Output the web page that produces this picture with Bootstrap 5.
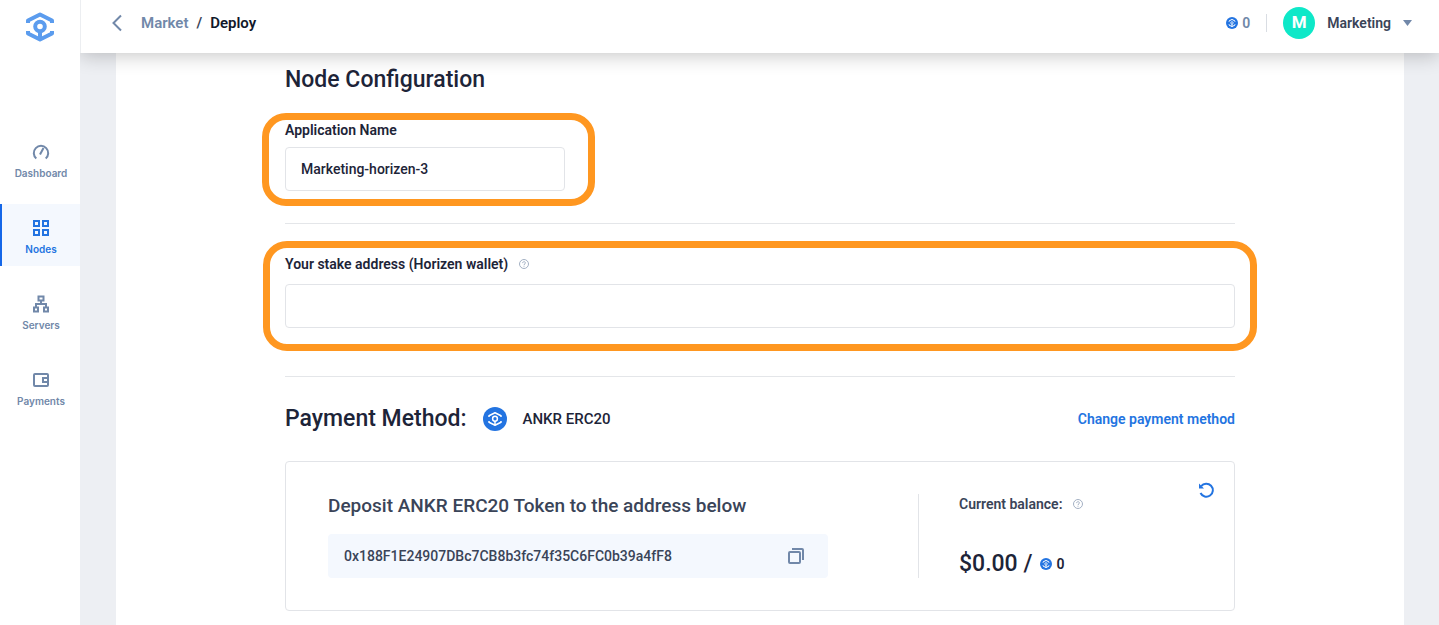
<!DOCTYPE html>
<html lang="en">
<head>
<meta charset="utf-8">
<meta name="viewport" content="width=device-width, initial-scale=1">
<title>Deploy</title>
<link href="https://cdn.jsdelivr.net/npm/bootstrap@5.3.0/dist/css/bootstrap.min.css" rel="stylesheet">
<style>
  :root { --ink: #1d2438; --slate: #3a4458; --muted: #7188a9; --brand: #2374e1; --line: #e2e4e8; --pale: #f4f8fe; --mark: #ff9720; }
  body { font-family: Roboto, "Liberation Sans", sans-serif; font-size: 14px; line-height: 20px; font-weight: 600; color: var(--ink); background: #edeff3; }
  a { text-decoration: none; }
  svg { display: block; flex: none; }
  .side { width: 80px; flex: none; position: relative; z-index: 1030; }
  .side-logo { height: 53px; margin-bottom: 75px; }
  .side-link { height: 62px; margin-bottom: 14px; padding-top: 5px; gap: 5px; border-left: 2px solid transparent; color: var(--muted); font: 600 10px/14px Inter, sans-serif; }
  .side-link.active { background: var(--pale); border-color: #1567e8; color: var(--brand); }
  .topbar { height: 53px; padding: 0 27px 7px 30px; border-left: 1px solid #eceef1; box-shadow: 0 2px 20px rgba(0,0,0,.24); }
  .crumbs { --bs-breadcrumb-item-padding-x: 8px; --bs-breadcrumb-divider-color: var(--slate); font-size: 15px; }
  .crumbs a, .muted { color: var(--muted); }
  .crumbs .active { color: #11182a; }
  .avatar { width: 32px; height: 32px; background: #0ee8c8; font-size: 17px; font-weight: 700; }
  .user { font-size: 14px; font-weight: 600; }
  .sep { width: 1px; height: 18px; background: #d9dde3; }
  .slate { color: var(--slate); }
  .panel { margin: 0 35px 0 36px; padding-top: 13px; }
  .inner { max-width: 950px; }
  h1, h2 { font-size: 23px; line-height: 28px; font-weight: 500; }
  h3 { font-size: 19px; line-height: 24px; font-weight: 500; color: var(--slate); }
  .group { position: relative; }
  .group::after { content: ""; position: absolute; border: 7px solid var(--mark); border-radius: 24px; pointer-events: none; }
  .group-name { margin-top: 26px; max-width: 280px; }
  .group-name::after { inset: -7px -30px -15px -23px; }
  .group-name .field { margin-top: 7px; }
  .group-stake::after { inset: -13px -22px -23px -22px; }
  .group-stake .field { margin-top: 10px; }
  .field { height: 44px; border: 1px solid var(--line); border-radius: 4px; padding: 0 15px; font-size: 14px; color: var(--ink); font-weight: 500; }
  .hint { gap: 11px; }
  .rule { margin: 32px 0 30px; border-top: 1px solid #e4e6e9; opacity: 1; }
  .rule-low { margin: 48px 0 28px; }
  .coin-name { font-size: 15px; font-weight: 500; }
  .deposit { margin-top: 28px; border: 1px solid var(--line); border-radius: 4px; padding: 32px 42px; }
  .address { height: 44px; background: var(--pale); border-radius: 4px; padding: 0 24px 0 16px; color: var(--slate); font-weight: 500; margin-top: 16px; }
  .left { width: 500px; }
  .balance { margin-left: 90px; padding-left: 40px; border-left: 1px solid var(--line); }
  .refresh { position: absolute; top: 20px; right: 19px; }
  .link { color: var(--brand); }
</style>
</head>
<body>
<svg width="0" height="0" class="position-absolute" aria-hidden="true">
  <symbol id="ankr" viewBox="0 0 28 30">
    <g fill="none" stroke="currentColor" stroke-linejoin="round">
      <path d="M2 11V8.500L14 2.500 26 8.500V11M2 19V21.500L14 27.500 26 21.500V19"/>
      <circle cx="14" cy="14.500" r="4.800"/><path d="M14 19v8"/>
    </g>
  </symbol>
  <symbol id="coin" viewBox="0 0 12 12">
    <circle cx="6" cy="6" r="6" fill="#2374e1"/>
    <path d="M3 4.600V4L6 2.400 9 4v.6M3 7.400V8l3 1.600L9 8v-.6M6 7v2.500" fill="none" stroke="#fff"/><circle cx="6" cy="5.900" r="1.200" fill="none" stroke="#fff" stroke-width=".8"/>
  </symbol>
  <symbol id="help" viewBox="0 0 10 10">
    <circle cx="5" cy="5" r="4.500" fill="none" stroke="#a3b0c3"/>
    <path d="M3.600 4.100C3.600 2.200 6.500 2.300 6.400 4 6.400 4.900 5 4.900 5 6M5 6.700v1" fill="none" stroke="#a3b0c3"/>
  </symbol>
</svg>
<div class="d-flex min-vh-100">
  <nav class="side bg-white d-flex flex-column" aria-label="Main">
    <a href="#" class="side-logo d-flex justify-content-center align-items-center" aria-label="Home"><svg width="28" height="30" color="#5b9cee" stroke-width="4"><use href="#ankr"/></svg></a>
    <a href="#" class="side-link d-flex flex-column align-items-center justify-content-center">
      <svg width="18" height="18" viewBox="0 0 18 18" fill="none" stroke="currentColor" stroke-width="2"><path d="M4.300 15.500A7.200 7.200 0 1 1 13.700 15.500"/><path d="M8 11.500 11.500 5"/></svg>Dashboard</a>
    <a href="#" class="side-link active d-flex flex-column align-items-center justify-content-center">
      <svg width="18" height="18" viewBox="0 0 18 18" fill="none" stroke="currentColor" stroke-width="2"><path d="M2 2h5v5H2zM11 2h5v5h-5zM2 11h5v5H2zM11 11h5v5h-5z"/></svg>Nodes</a>
    <a href="#" class="side-link d-flex flex-column align-items-center justify-content-center">
      <svg width="18" height="18" viewBox="0 0 18 18" fill="none" stroke="currentColor" stroke-width="2"><path d="M6.500 1.500h5v4h-5zM2 12.500h4v4H2zM12 12.500h4v4h-4zM9 6v3M4 12V9h10v3"/></svg>Servers</a>
    <a href="#" class="side-link d-flex flex-column align-items-center justify-content-center">
      <svg width="18" height="18" viewBox="0 0 18 18" fill="none" stroke="currentColor" stroke-width="2"><rect x="2" y="3" width="14" height="12" rx="1"/><path d="M17 7h-6v4h6"/></svg>Payments</a>
  </nav>
  <div class="flex-grow-1 d-flex flex-column">
    <header class="topbar bg-white sticky-top d-flex align-items-center">
      <a href="#" aria-label="Back" class="muted me-3"><svg width="14" height="18" viewBox="0 0 14 18" fill="none" stroke="currentColor" stroke-width="2"><path d="M10 1.500 2.500 9l7.500 7.500"/></svg></a>
      <nav aria-label="Breadcrumb"><ol class="breadcrumb crumbs mb-0">
        <li class="breadcrumb-item"><a href="#">Market</a></li>
        <li class="breadcrumb-item active" aria-current="page">Deploy</li>
      </ol></nav>
      <div class="ms-auto d-flex align-items-center">
        <svg width="12" height="12"><use href="#coin"/></svg><span class="muted ms-1">0</span>
        <span class="sep mx-3"></span>
        <button type="button" class="btn p-0 border-0 d-flex align-items-center slate">
          <span class="avatar rounded-circle text-white d-flex align-items-center justify-content-center me-2">M</span>
          <span class="user ms-1">Marketing</span>
          <svg class="ms-2 ps-1" width="13" height="6" viewBox="0 0 9 6"><path d="M0 0h9L4.500 6z" fill="#7188a9"/></svg>
        </button>
      </div>
    </header>
    <main class="panel bg-white flex-grow-1">
      <div class="inner mx-auto">
        <h1 class="mb-0">Node Configuration</h1>
        <div class="group group-name">
          <label for="app" class="d-block">Application Name</label>
          <input id="app" class="field form-control" value="Marketing-horizen-3">
        </div>
        <hr class="rule">
        <div class="group group-stake">
          <div class="hint d-flex align-items-center"><label for="stake">Your stake address (Horizen wallet)</label><svg width="10" height="10"><use href="#help"/></svg></div>
          <input id="stake" class="field form-control">
        </div>
        <hr class="rule rule-low">
        <div class="d-flex align-items-center gap-3">
          <h2 class="mb-0">Payment Method:</h2>
          <svg width="24" height="24" viewBox="0 0 24 24" color="#fff" stroke-width="3"><circle cx="12" cy="12" r="12" fill="#2374e1" stroke="none"/><use href="#ankr" x="5" y="4.500" width="14" height="15"/></svg>
          <span class="coin-name">ANKR ERC20</span>
          <a href="#" class="link ms-auto">Change payment method</a>
        </div>
        <section class="deposit position-relative d-flex">
          <div class="left">
            <h3 class="mb-0">Deposit ANKR ERC20 Token to the address below</h3>
            <div class="address d-flex align-items-center justify-content-between"><span>0x188F1E24907DBc7CB8b3fc74f35C6FC0b39a4fF8</span>
              <button type="button" class="btn p-0 border-0 muted" aria-label="Copy address"><svg width="16" height="16" viewBox="0 0 16 16" fill="none" stroke="currentColor" stroke-width="2"><rect x="1" y="4" width="11" height="11" rx="1"/><path d="M4 1h10q1 0 1 1v10"/></svg></button>
            </div>
          </div>
          <div class="balance d-flex flex-column justify-content-between">
            <div class="hint d-flex align-items-center slate"><span>Current balance:</span><svg width="10" height="10"><use href="#help"/></svg></div>
            <div class="d-flex align-items-center"><h2 class="mb-0 me-2">$0.00 /</h2><svg width="12" height="12"><use href="#coin"/></svg><span class="ms-1">0</span></div>
          </div>
          <button type="button" class="btn p-0 border-0 refresh link" aria-label="Refresh balance"><svg width="17" height="17" viewBox="0 0 17 17" fill="none" stroke="currentColor" stroke-width="2"><path d="M3.200 4.200A6.500 6.500 0 1 1 2.500 11"/><path d="M1 1.500v5h5z" fill="currentColor" stroke="none"/></svg></button>
        </section>
      </div>
    </main>
  </div>
</div>
<script src="https://cdn.jsdelivr.net/npm/bootstrap@5.3.0/dist/js/bootstrap.bundle.min.js"></script>
</body>
</html>
